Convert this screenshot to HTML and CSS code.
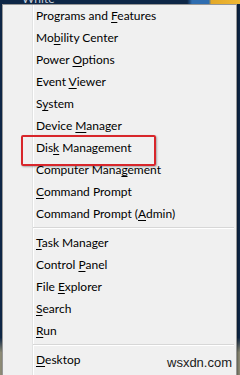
FILE: index.html
```html
<!DOCTYPE html>
<html lang="en">
<head>
    <meta charset="UTF-8">
    <meta name="viewport" content="width=device-width, initial-scale=1.0">
    <title>Quick Link Menu</title>
    <link rel="stylesheet" href="styles.css">
</head>
<body>
    <div class="desktop">
        <div class="taskbar-top"><span class="window-title">White</span></div>

        <div class="menu">
            <div class="item">Programs and <u>F</u>eatures</div>
            <div class="item">Mo<u>b</u>ility Center</div>
            <div class="item">Power <u>O</u>ptions</div>
            <div class="item">Event <u>V</u>iewer</div>
            <div class="item">S<u>y</u>stem</div>
            <div class="item">Device <u>M</u>anager</div>
            <div class="item marked">Dis<u>k</u> Management</div>
            <div class="item">Computer Mana<u>g</u>ement</div>
            <div class="item"><u>C</u>ommand Prompt</div>
            <div class="item">Command Prompt (<u>A</u>dmin)</div>
            <div class="separator"></div>
            <div class="item"><u>T</u>ask Manager</div>
            <div class="item">Control <u>P</u>anel</div>
            <div class="item">File <u>E</u>xplorer</div>
            <div class="item"><u>S</u>earch</div>
            <div class="item"><u>R</u>un</div>
            <div class="separator"></div>
            <div class="item"><u>D</u>esktop</div>
        </div>

        <div class="watermark">wsxdn.com</div>
    </div>
</body>
</html>
```

FILE: styles.css
```css
* {
    margin: 0;
    padding: 0;
    box-sizing: border-box;
}

html, body {
    height: 100%;
    overflow: hidden;
}

body {
    font-family: Lato, "Noto Sans", sans-serif;
    background: linear-gradient(to bottom, #0e2747 0%, #0e2747 90%, #8d8b76 94%, #8d8b76 100%);
    color: #000;
}

.desktop {
    position: relative;
    height: 100%;
}

.taskbar-top {
    position: relative;
    height: 4px;
    background: linear-gradient(to right, #0e2747 0%, #0e2747 78%, #2f6db0 80%, #2f6db0 87%, #e3a828 88%, #f0b935 100%);
    overflow: hidden;
}

.window-title {
    position: absolute;
    left: 22px;
    top: -7px;
    font-size: 12px;
    line-height: 12px;
    color: #c8d2de;
}

.menu {
    margin-left: 2px;
    width: 235px;
    height: 380px;
    padding-top: 0;
    border: 1px solid #979797;
    background: linear-gradient(to right, #f0f0f0 29px, #e2e3e3 29px, #e2e3e3 30px, #fff 30px, #fff 31px, #f0f0f0 31px);
    box-shadow: 1px 1px 2px rgba(0,0,0,0.35);
}

.item {
    position: relative;
    height: 22px;
    line-height: 22px;
    padding-left: 33px;
    font-size: 12px;
    white-space: nowrap;
    color: #000;
}

.item u {
    text-decoration-thickness: 1px;
    text-underline-offset: 2px;
}

.item.marked::after {
    content: "";
    position: absolute;
    left: 18px;
    top: -2px;
    width: 131px;
    height: 27px;
    border: 2px solid #d8262b;
    border-radius: 2px;
    box-shadow: 1px 1px 2px rgba(0,0,0,0.3);
}

.separator {
    height: 2px;
    margin: 2px 2px 3px 30px;
    border-top: 1px solid #d7d7d7;
    border-bottom: 1px solid #fff;
}

.watermark {
    position: absolute;
    left: 167px;
    top: 355px;
    font-family: "Liberation Sans", Arial, sans-serif;
    font-size: 13px;
    color: #1a1a1a;
}
```
